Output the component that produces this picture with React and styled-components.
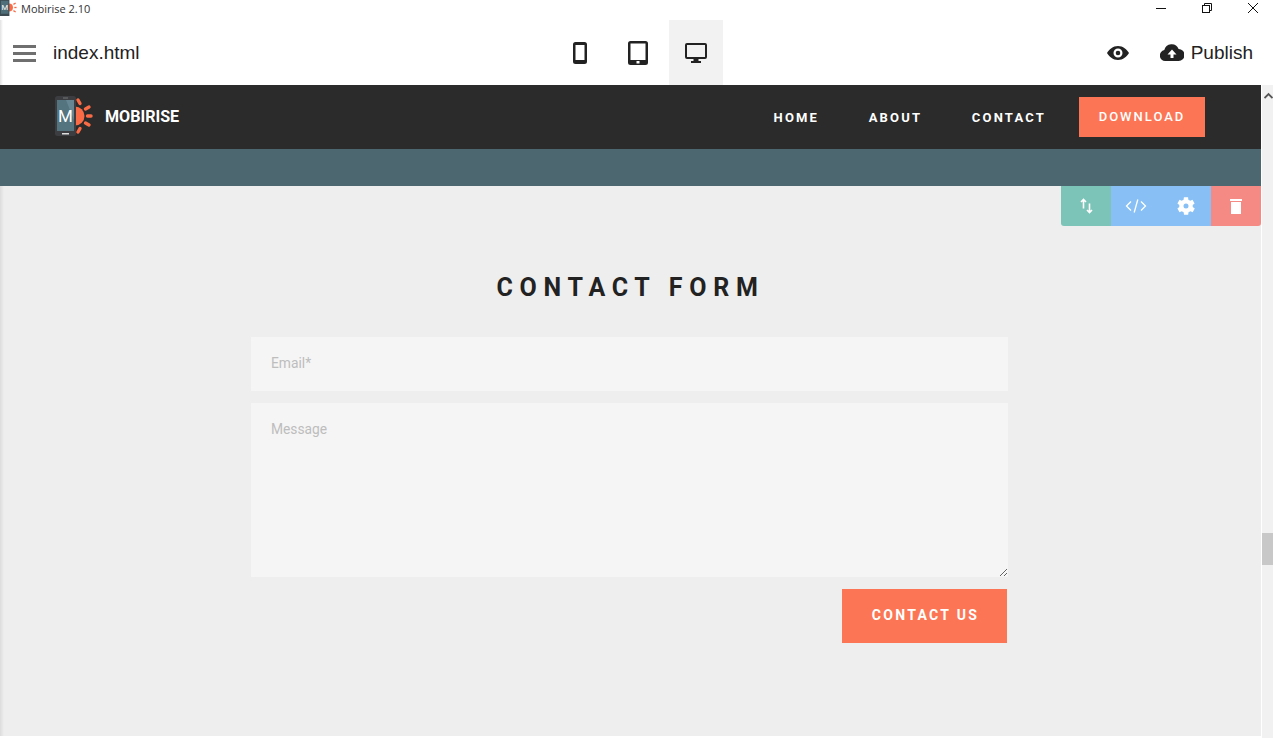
import React from "react";
import styled, { createGlobalStyle } from "styled-components";

const GlobalStyles = createGlobalStyle`
  html, body {
    margin: 0;
    padding: 0;
    height: 100%;
    overflow: hidden;
    background: #ffffff;
  }
  * {
    box-sizing: border-box;
  }
`;

const Window = styled.div`
  display: flex;
  flex-direction: column;
  width: 1273px;
  height: 738px;
  overflow: hidden;
  font-family: "Liberation Sans", Arial, sans-serif;
`;

const TitleBar = styled.div`
  display: flex;
  align-items: center;
  height: 20px;
  flex: none;
  background: #fff;
`;

const TitleText = styled.span`
  font-family: "Open Sans", "Noto Sans", sans-serif;
  font-size: 11px;
  color: #333;
  margin-left: 4px;
  margin-top: -4px;
`;

const TitleLogo = styled.svg`
  width: 17px;
  height: 17px;
  margin-top: -6px;
  flex: none;
`;

const WindowButtons = styled.div`
  display: flex;
  margin-left: auto;
  margin-right: -3px;
  margin-top: -5px;
`;

const WindowButton = styled.div`
  width: 46px;
  display: flex;
  justify-content: center;
  align-items: center;
  height: 14px;
`;

const Toolbar = styled.div`
  position: relative;
  display: grid;
  grid-template-columns: 1fr auto 1fr;
  height: 65px;
  flex: none;
  background: #fff;
  &::before {
    content: "";
    position: absolute;
    left: 0;
    top: 0;
    bottom: 0;
    width: 3px;
    background: linear-gradient(to right, #e2e2e2, #ffffff);
  }
`;

const ToolbarLeft = styled.div`
  display: flex;
  align-items: center;
  padding-left: 13px;
  gap: 17px;
`;

const FileName = styled.span`
  font-size: 19px;
  color: #222;
`;

const Devices = styled.div`
  display: flex;
  gap: 4px;
  margin-left: 3px;
`;

const DeviceButton = styled.div`
  width: 54px;
  height: 65px;
  display: flex;
  align-items: center;
  justify-content: center;
  background: ${(p) => (p.$active ? "#f2f2f2" : "transparent")};
`;

const ToolbarRight = styled.div`
  display: flex;
  align-items: center;
  justify-content: flex-end;
  padding-right: 20px;
`;

const PublishLabel = styled.span`
  font-size: 19px;
  color: #222;
  margin-left: 7px;
`;

const EyeIcon = styled.svg`
  margin-right: 31px;
`;

const Body = styled.div`
  display: flex;
  flex: 1;
  min-height: 0;
`;

const Page = styled.div`
  flex: 1;
  display: flex;
  flex-direction: column;
  min-width: 0;
`;

const Nav = styled.nav`
  display: flex;
  align-items: center;
  height: 64px;
  flex: none;
  padding: 0 56px 0 55px;
  background: #2b2b2b;
  font-family: Roboto, sans-serif;
`;

const Brand = styled.div`
  display: flex;
  align-items: center;
  gap: 12px;
  color: #fff;
  font-weight: 700;
  font-size: 16.1px;
  margin-right: auto;
  margin-bottom: 2px;
`;

const NavLink = styled.a`
  color: #fff;
  font-size: 13px;
  font-weight: 700;
  letter-spacing: 2.2px;
  margin-right: 49.5px;
  padding-top: 1px;
  &:nth-of-type(3) {
    margin-right: 33px;
  }
`;

const DownloadButton = styled.div`
  width: 126px;
  height: 40px;
  display: flex;
  align-items: center;
  justify-content: center;
  background: #fc7655;
  color: #fff;
  font-size: 13px;
  font-weight: 500;
  letter-spacing: 2px;
  margin-bottom: 1px;
`;

const Band = styled.div`
  height: 37px;
  flex: none;
  background: #4c6770;
`;

const Section = styled.section`
  position: relative;
  flex: 1;
  margin-bottom: 2px;
  background: #eeeeee;
  padding-top: 86px;
  display: flex;
  flex-direction: column;
  align-items: center;
  font-family: Roboto, sans-serif;
  &::before {
    content: "";
    position: absolute;
    left: 0;
    top: 0;
    bottom: 0;
    width: 4px;
    background: linear-gradient(to right, #dcdcdc, #eeeeee);
  }
`;

const BlockControls = styled.div`
  position: absolute;
  top: 0;
  right: 0;
  display: flex;
  height: 40px;
  border-radius: 0 0 3px 3px;
  overflow: hidden;
`;

const ControlButton = styled.div`
  width: 50px;
  display: flex;
  align-items: center;
  justify-content: center;
  background: ${(p) => p.$color};
`;

const Heading = styled.h2`
  margin: 0 0 33px;
  font-size: 25px;
  line-height: 32px;
  font-weight: 700;
  letter-spacing: 6.7px;
  color: #222;
`;

const Form = styled.form`
  width: 757px;
  margin-right: 2px;
  display: flex;
  flex-direction: column;
  gap: 12px;
`;

const fieldStyles = `
  display: block;
  width: 100%;
  border: 0;
  outline: none;
  background: #f5f5f5;
  font-family: Roboto, sans-serif;
  font-size: 13.8px;
  color: #333;
  padding: 0 20px;
  &::placeholder {
    color: #bdbdbd;
    opacity: 1;
  }
`;

const EmailInput = styled.input`
  ${fieldStyles}
  height: 54px;
  padding-bottom: 2px;
`;

const MessageInput = styled.textarea`
  ${fieldStyles}
  height: 174px;
  padding-top: 18px;
  resize: vertical;
`;

const SubmitRow = styled.div`
  display: flex;
  justify-content: flex-end;
  padding-right: 1px;
`;

const SubmitButton = styled.button`
  width: 165px;
  height: 54px;
  border: 0;
  padding: 0 0 2px 2px;
  background: #fc7655;
  color: #fff;
  font-family: Roboto, sans-serif;
  font-size: 14px;
  font-weight: 700;
  letter-spacing: 2.3px;
`;

const Scrollbar = styled.div`
  position: relative;
  width: 12px;
  flex: none;
  background: #f1f1f1;
  border-left: 1px solid #fff;
`;

const ScrollArrow = styled.svg`
  display: block;
  margin: 7px 0 0 2px;
`;

const ScrollThumb = styled.div`
  position: absolute;
  top: 448px;
  left: 0;
  right: 0;
  height: 32px;
  background: #c8c8c8;
`;

const HamburgerIcon = styled.div`
  width: 23px;
  height: 17px;
  flex: none;
  margin-top: 1px;
  border-top: 3px solid #6f6f6f;
  border-bottom: 3px solid #6f6f6f;
  position: relative;
  &::after {
    content: "";
    position: absolute;
    left: 0;
    right: 0;
    top: 4px;
    height: 3px;
    background: #6f6f6f;
  }
`;

function LogoMark() {
  return (
    <svg width="38" height="40" viewBox="0 0 38 40">
      <circle cx="20" cy="20" r="9.500" fill="#fb6b45" />
      <g stroke="#fb6b45" strokeWidth="3.400" strokeLinecap="round">
        <line x1="23" y1="4" x2="25" y2="7.500" />
        <line x1="30.500" y1="13" x2="34" y2="11" />
        <line x1="32.500" y1="20" x2="36" y2="20" />
        <line x1="30.500" y1="27" x2="34" y2="29" />
        <line x1="23" y1="36" x2="25" y2="32.500" />
      </g>
      <rect x="0" y="0" width="21" height="40" rx="2.500" fill="#3b3d40" />
      <rect x="2" y="4" width="17" height="31" fill="#547480" />
      <path d="M11 4h8v20z" fill="#658692" />
      <rect x="8" y="1.500" width="5" height="1" fill="#777" />
      <rect x="7" y="37" width="7" height="1.500" fill="#ddd" />
      <text x="10.500" y="26" textAnchor="middle" fontFamily="Roboto, sans-serif" fontWeight="400" fontSize="17" fill="#fff">
        M
      </text>
    </svg>
  );
}

function App() {
  return (
    <Window>
      <GlobalStyles />
      <TitleBar>
        <TitleLogo viewBox="0 0 38 38">
          <circle cx="20" cy="19" r="9" fill="#fb6b45" />
          <g stroke="#fb6b45" strokeWidth="3">
            <line x1="30" y1="12" x2="35" y2="9" />
            <line x1="32" y1="19" x2="37" y2="19" />
            <line x1="30" y1="26" x2="35" y2="29" />
          </g>
          <rect x="0" y="0" width="21" height="38" fill="#3d4c52" />
          <rect x="2" y="4" width="17" height="29" fill="#4f6f7b" />
          <text x="10.500" y="25" textAnchor="middle" fontFamily="Roboto, sans-serif" fontSize="17" fill="#fff">
            M
          </text>
        </TitleLogo>
        <TitleText>Mobirise 2.10</TitleText>
        <WindowButtons>
          <WindowButton>
            <svg width="12" height="12" viewBox="0 0 12 12">
              <line x1="1" y1="6.500" x2="11" y2="6.500" stroke="#111" />
            </svg>
          </WindowButton>
          <WindowButton>
            <svg width="12" height="12" viewBox="0 0 12 12" fill="none" stroke="#111">
              <rect x="1.500" y="3.500" width="7" height="7" />
              <path d="M3.500 3.500v-2h7v7h-2" />
            </svg>
          </WindowButton>
          <WindowButton>
            <svg width="12" height="12" viewBox="0 0 12 12" stroke="#111">
              <line x1="1" y1="1" x2="11" y2="11" />
              <line x1="11" y1="1" x2="1" y2="11" />
            </svg>
          </WindowButton>
        </WindowButtons>
      </TitleBar>

      <Toolbar>
        <ToolbarLeft>
          <HamburgerIcon />
          <FileName>index.html</FileName>
        </ToolbarLeft>
        <Devices>
          <DeviceButton>
            <svg width="14" height="22" viewBox="0 0 14 22">
              <path
                fillRule="evenodd"
                d="M2.500 0h9A2.500 2.500 0 0 1 14 2.500v17a2.500 2.500 0 0 1-2.500 2.500h-9A2.500 2.500 0 0 1 0 19.500v-17A2.500 2.500 0 0 1 2.500 0zM2.500 3v15h9V3z"
                fill="#222"
              />
            </svg>
          </DeviceButton>
          <DeviceButton>
            <svg width="20" height="24" viewBox="0 0 20 24">
              <path
                fillRule="evenodd"
                d="M2.500 0h15A2.500 2.500 0 0 1 20 2.500v19a2.500 2.500 0 0 1-2.500 2.500h-15A2.500 2.500 0 0 1 0 21.500v-19A2.500 2.500 0 0 1 2.500 0zM2.500 2.500V19h15V2.500zM8.500 20v2.500h3V20z"
                fill="#222"
              />
            </svg>
          </DeviceButton>
          <DeviceButton $active>
            <svg width="22" height="20" viewBox="0 0 22 20">
              <path
                fillRule="evenodd"
                d="M2 0h18a2 2 0 0 1 2 2v12a2 2 0 0 1-2 2h-6.500v2H16v2H6v-2h2.500v-2H2a2 2 0 0 1-2-2V2a2 2 0 0 1 2-2zM2 2v12h18V2z"
                fill="#222"
              />
            </svg>
          </DeviceButton>
        </Devices>
        <ToolbarRight>
          <EyeIcon width="22" height="14" viewBox="0 0 22 14">
            <path
              fillRule="evenodd"
              d="M11 0c5 0 9 3.500 11 7-2 3.500-6 7-11 7S2 10.500 0 7c2-3.500 6-7 11-7zm0 2.500a4.500 4.500 0 1 0 0 9 4.500 4.500 0 0 0 0-9zm0 2.200a2.300 2.300 0 1 1 0 4.600 2.300 2.300 0 0 1 0-4.600z"
              fill="#222"
            />
          </EyeIcon>
          <svg width="24" height="17" viewBox="0 0 24 17">
            <path
              fillRule="evenodd"
              d="M5.500 17A5.500 5.500 0 0 1 4.300 6.100 7.500 7.500 0 0 1 18.600 5 6 6 0 0 1 18.500 17zM12 5.500L7.500 10.500h3V14h3v-3.500h3z"
              fill="#222"
            />
          </svg>
          <PublishLabel>Publish</PublishLabel>
        </ToolbarRight>
      </Toolbar>

      <Body>
        <Page>
          <Nav>
            <Brand>
              <LogoMark />
              MOBIRISE
            </Brand>
            <NavLink>HOME</NavLink>
            <NavLink>ABOUT</NavLink>
            <NavLink>CONTACT</NavLink>
            <DownloadButton>DOWNLOAD</DownloadButton>
          </Nav>
          <Band />
          <Section>
            <BlockControls>
              <ControlButton $color="#7cc4b7">
                <svg width="13" height="16" viewBox="0 0 13 16" fill="none" stroke="#fff" strokeWidth="1.600">
                  <path d="M3.500 10.500V1.500M1 4l2.500-2.500L6 4" />
                  <path d="M9.500 5.500v9M7 12l2.500 2.500L12 12" />
                </svg>
              </ControlButton>
              <ControlButton $color="#88c0f5">
                <svg width="22" height="14" viewBox="0 0 22 14" fill="none" stroke="#fff" strokeWidth="1.300">
                  <path d="M6 2.500L1.500 7 6 11.500M16 2.500L20.500 7 16 11.500M12.800 0.500L9.200 13.500" />
                </svg>
              </ControlButton>
              <ControlButton $color="#88c0f5">
                <svg width="20" height="20" viewBox="0 0 24 24">
                  <path
                    fill="#fff"
                    d="M20 13.300a8 8 0 0 0 0-2.600l2.300-1.800-2.500-4.300-2.700 1.100a8 8 0 0 0-2.300-1.300L14.500 1.500h-5l-.4 2.900a8 8 0 0 0-2.300 1.300L4.200 4.600 1.700 8.900 4 10.700a8 8 0 0 0 0 2.600l-2.300 1.800 2.500 4.300 2.700-1.100a8 8 0 0 0 2.300 1.300l.4 2.900h5l.4-2.900a8 8 0 0 0 2.300-1.300l2.700 1.100 2.500-4.300zM12 15a3 3 0 1 1 0-6 3 3 0 0 1 0 6z"
                  />
                </svg>
              </ControlButton>
              <ControlButton $color="#f58a84">
                <svg width="12" height="15" viewBox="0 0 12 15">
                  <path fill="#fff" d="M0 0h12v2H0zM1 3h10v12H1z" />
                </svg>
              </ControlButton>
            </BlockControls>
            <Heading>CONTACT FORM</Heading>
            <Form>
              <EmailInput placeholder="Email*" />
              <MessageInput placeholder="Message" />
              <SubmitRow>
                <SubmitButton type="button">CONTACT US</SubmitButton>
              </SubmitRow>
            </Form>
          </Section>
        </Page>
        <Scrollbar>
          <ScrollArrow width="9" height="7" viewBox="0 0 9 7" fill="none" stroke="#555" strokeWidth="1.800">
            <path d="M0.500 6l4-4 4 4" />
          </ScrollArrow>
          <ScrollThumb />
        </Scrollbar>
      </Body>
    </Window>
  );
}

export default App;
